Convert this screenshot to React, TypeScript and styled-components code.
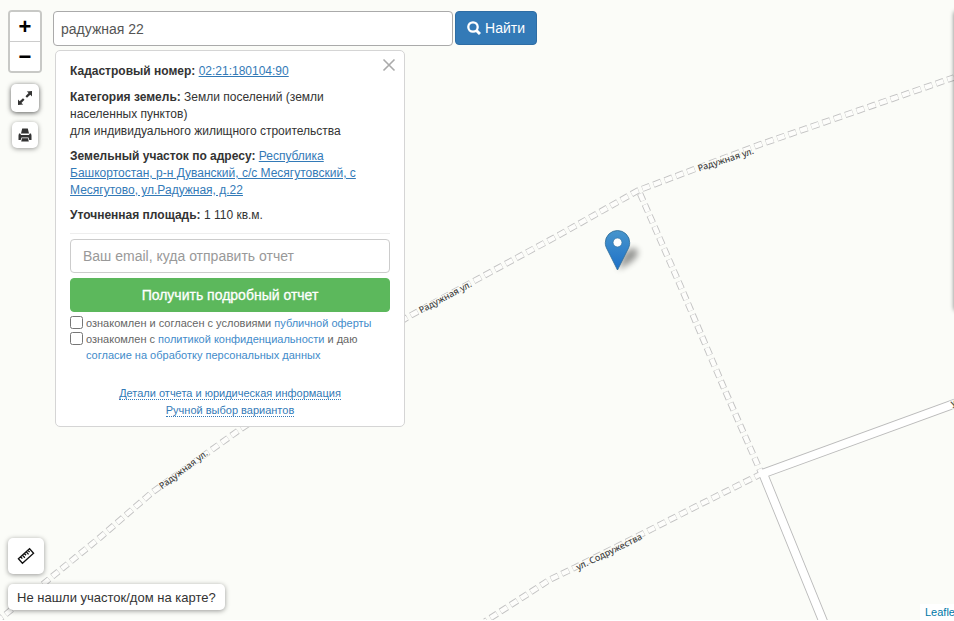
import React, { useState } from "react";
import styled, { createGlobalStyle } from "styled-components";

const GlobalStyle = createGlobalStyle`
  * { box-sizing: border-box; }
  body {
    margin: 0;
    font-family: "Liberation Sans", Arial, sans-serif;
    font-size: 14px;
    color: #333;
    background: #fff;
  }
  button, input { font-family: inherit; }
`;

const Page = styled.main`
  position: relative;
  display: flex;
  flex-direction: column;
  justify-content: space-between;
  gap: 16px;
  min-height: 100vh;
  overflow: hidden;
  background: #fbfcf8;
  border-bottom: 1px solid #fff;
`;

const MapCanvas = styled.svg`
  position: absolute;
  inset: 0;
  width: 100%;
  height: 100%;
`;

const StreetLabel = styled.text`
  font-family: "Noto Sans", sans-serif;
  font-size: 9px;
  font-weight: 500;
  fill: #444;
  stroke: #fbfcf8;
  stroke-width: 2px;
  stroke-linejoin: round;
  paint-order: stroke;
`;

const SidePanelEdge = styled.aside`
  position: absolute;
  top: 11px;
  left: 100%;
  width: 200px;
  height: 300px;
  border-radius: 4px;
  background: #fff;
  box-shadow: 0 0 4px rgba(0, 0, 0, 0.5);
`;

const TopArea = styled.div`
  position: relative;
  display: flex;
  align-items: flex-start;
  gap: 11px;
  padding: 10px 8px 0;
`;

const Controls = styled.div`
  display: flex;
  flex-direction: column;
  align-items: center;
  flex: none;
  width: 34px;
`;

const ZoomGroup = styled.div`
  width: 34px;
  margin-bottom: 11px;
  border: 2px solid rgba(0, 0, 0, 0.2);
  border-radius: 4px;
  background: #fff;
  background-clip: padding-box;
  overflow: hidden;
`;

const ZoomButton = styled.button<{ $divided?: boolean }>`
  display: flex;
  align-items: center;
  justify-content: center;
  width: 100%;
  height: ${(p) => (p.$divided ? 30 : 29)}px;
  padding: 0;
  border: 0;
  border-bottom: ${(p) => (p.$divided ? "1px solid #ccc" : "0")};
  background: #fff;
  color: #000;
  font: bold 22px/28px "Liberation Sans", Arial, sans-serif;
`;

const IconButton = styled.button<{ $size: number; $strong?: boolean }>`
  display: flex;
  align-items: center;
  justify-content: center;
  width: ${(p) => p.$size}px;
  height: ${(p) => p.$size}px;
  margin-bottom: 10px;
  padding: 0;
  border: 0;
  border-radius: 5px;
  background: #fff;
  color: #333;
  box-shadow: 0 1px 5px rgba(0, 0, 0, ${(p) => (p.$strong ? 0.65 : 0.4)});
`;

const SearchArea = styled.div`
  flex: 0 1 484px;
  min-width: 0;
`;

const SearchForm = styled.form`
  display: flex;
  gap: 2px;
  padding-top: 1px;
`;

const SearchInput = styled.input`
  flex: 1 1 0;
  min-width: 0;
  height: 35px;
  padding: 0 7px;
  border: 1px solid #aaa;
  border-radius: 4px;
  background: #fff;
  color: #555;
  font-size: 14px;
  outline: 0;
`;

const SearchButton = styled.button`
  display: flex;
  align-items: center;
  justify-content: center;
  gap: 4px;
  width: 82px;
  height: 34px;
  padding: 0;
  border: 1px solid #2e6da4;
  border-radius: 4px;
  background: #337ab7;
  color: #fff;
  font-size: 14px;
`;

const Card = styled.section`
  position: relative;
  width: 350px;
  max-width: 100%;
  margin: 4px 0 0 2px;
  padding: 12px 14px 8px;
  border: 1px solid #d5d5d5;
  border-radius: 5px;
  background: #fff;
  font-size: 12px;
  line-height: 17px;
`;

const CloseButton = styled.button`
  position: absolute;
  top: 7px;
  right: 8px;
  display: flex;
  padding: 0;
  border: 0;
  background: none;
  color: #aaa;
`;

const Fact = styled.p`
  margin: 0 0 8px;
  &:first-of-type { margin-bottom: 9px; }
`;

const FactLink = styled.a`
  color: #337ab7;
  text-decoration: underline;
`;

const ReportForm = styled.form`
  margin-top: 9px;
  padding-top: 5px;
  border-top: 1px solid #eee;
`;

const EmailInput = styled.input`
  display: block;
  width: 100%;
  height: 34px;
  padding: 0 12px;
  border: 1px solid #ccc;
  border-radius: 4px;
  color: #555;
  font-size: 14px;
  &::placeholder { color: #999; }
`;

const SubmitButton = styled.button`
  display: block;
  width: 100%;
  height: 34px;
  margin: 5px 0 3px;
  border: 1px solid #5cb85c;
  border-radius: 4px;
  background: #5cb85c;
  color: #fff;
  font-size: 14px;
  -webkit-text-stroke: 0.3px #fff;
`;

const ConsentList = styled.div`
  font-size: 11px;
  line-height: 16px;
  color: #666;
`;

const Consent = styled.div`
  display: flex;
  align-items: flex-start;
  gap: 3px;
`;

const ConsentBox = styled.input`
  flex: none;
  width: 13px;
  height: 13px;
  margin: 1px 0 0;
`;

const ConsentLink = styled.a`
  color: #428bca;
  text-decoration: none;
`;

const CardFooter = styled.nav`
  display: flex;
  flex-direction: column;
  align-items: center;
  gap: 4px;
  margin-top: 24px;
  padding-bottom: 1px;
  font-size: 11px;
  line-height: 12px;
`;

const DottedLink = styled.a`
  border-bottom: 1px dotted #337ab7;
  color: #337ab7;
  text-decoration: none;
`;

const BottomArea = styled.div`
  position: relative;
  display: flex;
  align-items: flex-end;
  justify-content: space-between;
  padding-left: 8px;
`;

const BottomTools = styled.div`
  padding-bottom: 10px;
`;

const HelpButton = styled.button`
  height: 26px;
  padding: 0 9px;
  border: 0;
  border-radius: 5px;
  background: #fff;
  color: #333;
  font-size: 13px;
  box-shadow: 0 1px 5px rgba(0, 0, 0, 0.4);
`;

const Attribution = styled.a`
  flex: none;
  width: 34px;
  padding-left: 5px;
  overflow: hidden;
  background: #fff;
  color: #0078a8;
  font-size: 11px;
  line-height: 16px;
  white-space: nowrap;
  text-decoration: none;
`;

const DASHED_ROADS = [
  "M-4 622 L3 617 L45 583 L100 538 L152 493 L240 430 L407 318 L475 281 L560 235 L638 191 L760 145 L954 78",
  "M640 194 L682 290 L725 391 L761 473",
  "M762 474 L690 510 L647 532 L573 569 L550 580 L527 595 L485 622",
];
const SOLID_ROADS = "M958 403 L763 474 L824 624";

function StreetMap() {
  return (
    <MapCanvas viewBox="0 0 954 621" preserveAspectRatio="xMidYMid slice" role="img" aria-label="Карта">
      <defs>
        <linearGradient id="pin" x1="0" y1="0" x2="0" y2="1">
          <stop offset="0" stopColor="#4795cc" />
          <stop offset="1" stopColor="#1d70c8" />
        </linearGradient>
        <filter id="soft" x="-50%" y="-50%" width="200%" height="200%">
          <feGaussianBlur stdDeviation="3" />
        </filter>
      </defs>
      <g fill="none" strokeLinejoin="round">
        {DASHED_ROADS.map((d) => (
          <path key={d} d={d} stroke="#c2c2c2" strokeWidth="6.4" strokeDasharray="8 4" />
        ))}
        <path d={SOLID_ROADS} stroke="#bbb" strokeWidth="9.6" />
        {DASHED_ROADS.map((d) => (
          <path
            key={d}
            d={d}
            stroke="#fdfdfb"
            strokeWidth="4.6"
            strokeDasharray="7.4 4.6"
            strokeDashoffset="-0.3"
          />
        ))}
        <path d={SOLID_ROADS} stroke="#fff" strokeWidth="7.8" />
      </g>
      <StreetLabel transform="translate(699 172) rotate(-18)">Радужная ул.</StreetLabel>
      <StreetLabel transform="translate(421 314) rotate(-28)">Радужная ул.</StreetLabel>
      <StreetLabel transform="translate(162 490) rotate(-37)">Радужная ул.</StreetLabel>
      <StreetLabel transform="translate(578 571) rotate(-26)">ул. Содружества</StreetLabel>
      <StreetLabel transform="translate(952 407) rotate(-20)">у</StreetLabel>
      <path d="M618 270 L624 254 Q634 244 638 252 Q638 261 618 270Z" fill="#000" opacity="0.4" filter="url(#soft)" />
      <path
        d="M617.5 270.5 L607.5 250.5 C605.8 247.4 605.3 245.5 605.3 243.2 A12.2 12.2 0 0 1 629.7 243.2 C629.7 245.5 629.2 247.4 627.5 250.5Z"
        fill="url(#pin)"
        stroke="#2e6c97"
        strokeWidth="0.8"
      />
      <circle cx="617.5" cy="243" r="4.4" fill="#fff" stroke="#2e6c97" strokeWidth="0.6" />
    </MapCanvas>
  );
}

const ExpandIcon = () => (
  <svg width="16" height="16" viewBox="0 0 16 16" fill="currentColor" aria-hidden="true">
    <path d="M15 1v5.4l-1.700-1.700-3.300 3-1.500-1.500 3.100-3.200L9.800 1.400zM1 15V9.600l1.700 1.700 3.300-3 1.500 1.500-3.100 3.200 1.800 1.600z" />
  </svg>
);

const PrintIcon = () => (
  <svg width="14" height="14" viewBox="0 0 14 14" fill="currentColor" aria-hidden="true">
    <path d="M4.200 0.500h5.600L11 5.500H3zM1 5.500h1.200L3 7h8l.8-1.500H13l.5 2V12h-2.200l-.8-2.500h-7L2.700 12H.5V7.500zM4 10.300h6l.8 3.200H3.200z" />
  </svg>
);

const SearchIcon = () => (
  <svg width="14" height="14" viewBox="0 0 14 14" fill="none" stroke="currentColor" aria-hidden="true">
    <circle cx="6" cy="6" r="4.700" strokeWidth="2.300" />
    <path d="M9.200 9.200 L13 13" strokeWidth="3" />
  </svg>
);

const CloseIcon = () => (
  <svg width="14" height="14" viewBox="0 0 14 14" stroke="currentColor" strokeWidth="1.600" aria-hidden="true">
    <path d="M1.500 1.500l11 11M12.500 1.500l-11 11" />
  </svg>
);

const RulerIcon = () => (
  <svg width="18" height="18" viewBox="0 0 18 18" fill="none" stroke="#111" strokeWidth="1.300" aria-hidden="true">
    <g transform="rotate(-42 9 9)">
      <path d="M1.500 6h15v6h-15zM4.500 6v2.500M7 6v3.500M9.500 6v2.500M12 6v3.500M14.300 6v2.500" />
    </g>
  </svg>
);

export default function App() {
  const [query, setQuery] = useState("радужная 22");
  const [email, setEmail] = useState("");
  const [cardOpen, setCardOpen] = useState(true);
  const stop = (e: React.FormEvent) => e.preventDefault();

  return (
    <>
      <GlobalStyle />
      <Page>
        <StreetMap />
        <SidePanelEdge aria-hidden="true" />
        <TopArea>
          <Controls>
            <ZoomGroup>
              <ZoomButton type="button" aria-label="Приблизить" $divided>+</ZoomButton>
              <ZoomButton type="button" aria-label="Отдалить">−</ZoomButton>
            </ZoomGroup>
            <IconButton type="button" aria-label="На весь экран" $size={28} $strong>
              <ExpandIcon />
            </IconButton>
            <IconButton type="button" aria-label="Печать" $size={26}>
              <PrintIcon />
            </IconButton>
          </Controls>
          <SearchArea>
            <SearchForm onSubmit={stop}>
              <SearchInput aria-label="Поиск участка" value={query} onChange={(e) => setQuery(e.target.value)} />
              <SearchButton type="submit">
                <SearchIcon />
                Найти
              </SearchButton>
            </SearchForm>
            {cardOpen && (
              <Card>
                <CloseButton type="button" aria-label="Закрыть" onClick={() => setCardOpen(false)}>
                  <CloseIcon />
                </CloseButton>
                <Fact>
                  <b>Кадастровый номер:</b> <FactLink href="#number">02:21:180104:90</FactLink>
                </Fact>
                <Fact>
                  <b>Категория земель:</b> Земли поселений (земли
                  <br />
                  населенных пунктов)
                  <br />
                  для индивидуального жилищного строительства
                </Fact>
                <Fact>
                  <b>Земельный участок по адресу:</b>{" "}
                  <FactLink href="#address">
                    Республика Башкортостан, р-н Дуванский, с/с Месягутовский, с Месягутово, ул.Радужная, д.22
                  </FactLink>
                </Fact>
                <Fact>
                  <b>Уточненная площадь:</b> 1 110 кв.м.
                </Fact>
                <ReportForm onSubmit={stop}>
                  <EmailInput
                    type="email"
                    aria-label="Email"
                    placeholder="Ваш email, куда отправить отчет"
                    value={email}
                    onChange={(e) => setEmail(e.target.value)}
                  />
                  <SubmitButton type="submit">Получить подробный отчет</SubmitButton>
                  <ConsentList>
                    <Consent>
                      <ConsentBox type="checkbox" id="offer" />
                      <label htmlFor="offer">
                        ознакомлен и согласен с условиями <ConsentLink href="#offer-text">публичной оферты</ConsentLink>
                      </label>
                    </Consent>
                    <Consent>
                      <ConsentBox type="checkbox" id="privacy" />
                      <label htmlFor="privacy">
                        ознакомлен с <ConsentLink href="#privacy-text">политикой конфиденциальности</ConsentLink> и даю{" "}
                        <ConsentLink href="#consent-text">согласие на обработку персональных данных</ConsentLink>
                      </label>
                    </Consent>
                  </ConsentList>
                </ReportForm>
                <CardFooter>
                  <DottedLink href="#details">Детали отчета и юридическая информация</DottedLink>
                  <DottedLink href="#manual">Ручной выбор вариантов</DottedLink>
                </CardFooter>
              </Card>
            )}
          </SearchArea>
        </TopArea>
        <BottomArea>
          <BottomTools>
            <IconButton type="button" aria-label="Линейка" $size={36}>
              <RulerIcon />
            </IconButton>
            <HelpButton type="button">Не нашли участок/дом на карте?</HelpButton>
          </BottomTools>
          <Attribution href="#leaflet">Leaflet</Attribution>
        </BottomArea>
      </Page>
    </>
  );
}
